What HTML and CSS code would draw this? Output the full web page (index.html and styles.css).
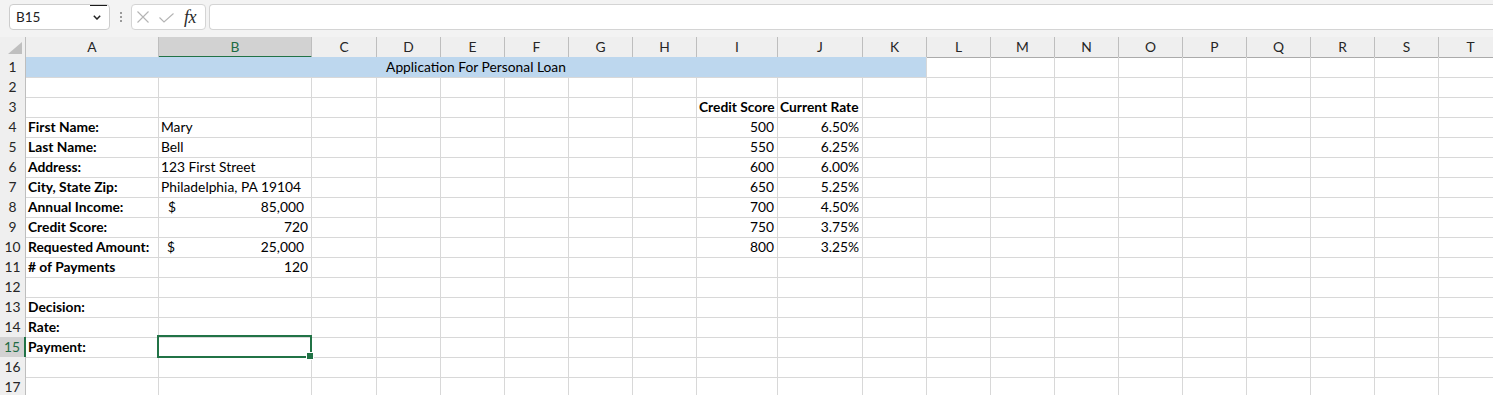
FILE: index.html
```html
<!DOCTYPE html>
<html lang="en">
<head>
<meta charset="utf-8">
<title>Application For Personal Loan</title>
<link rel="stylesheet" href="styles.css">
</head>
<body>
<div class="toolbar">
  <div class="namebox">
    <span class="ref">B15</span>
    <svg class="chev" width="8" height="5" viewBox="0 0 8 5"><path d="M0.8 0.8 L4 4 L7.2 0.8" fill="none" stroke="#222" stroke-width="1.5"/></svg>
  </div>
  <div class="grip"><i></i><i></i><i></i></div>
  <div class="fbtns">
    <svg class="xic" width="12" height="12" viewBox="0 0 12 12"><path d="M0.5 0.5 L11.5 11.5 M11.5 0.5 L0.5 11.5" stroke="#b4b4b4" stroke-width="1.1" fill="none"/></svg>
    <svg class="chk" width="15" height="10" viewBox="0 0 15 10"><path d="M0.5 4.5 L5 9 L14.5 0.5" stroke="#b4b4b4" stroke-width="1.1" fill="none"/></svg>
    <span class="fx">fx</span>
  </div>
  <div class="formula"></div>
</div>

<div class="sheet">
  <div class="row hdr">
    <div class="corner"><svg width="14" height="12" viewBox="0 0 14 12"><polygon points="14,0 14,12 0,12" fill="#bfbfbf"/></svg></div>
    <div class="ch">A</div><div class="ch act">B</div><div class="ch">C</div><div class="ch">D</div><div class="ch">E</div><div class="ch">F</div><div class="ch">G</div><div class="ch">H</div><div class="ch">I</div><div class="ch">J</div><div class="ch">K</div><div class="ch">L</div><div class="ch">M</div><div class="ch">N</div><div class="ch">O</div><div class="ch">P</div><div class="ch">Q</div><div class="ch">R</div><div class="ch">S</div><div class="ch">T</div>
  </div>

  <div class="row">
    <div class="rh">1</div>
    <div class="c title">Application For Personal Loan</div>
    <div class="c"></div><div class="c"></div><div class="c"></div><div class="c"></div><div class="c"></div><div class="c"></div><div class="c"></div><div class="c"></div><div class="c"></div>
  </div>

  <div class="row">
    <div class="rh">2</div>
    <div class="c"></div><div class="c"></div><div class="c"></div><div class="c"></div><div class="c"></div><div class="c"></div><div class="c"></div><div class="c"></div><div class="c"></div><div class="c"></div><div class="c"></div><div class="c"></div><div class="c"></div><div class="c"></div><div class="c"></div><div class="c"></div><div class="c"></div><div class="c"></div><div class="c"></div><div class="c"></div>
  </div>

  <div class="row">
    <div class="rh">3</div>
    <div class="c"></div><div class="c"></div><div class="c"></div><div class="c"></div><div class="c"></div><div class="c"></div><div class="c"></div><div class="c"></div>
    <div class="c b">Credit Score</div><div class="c b">Current Rate</div>
    <div class="c"></div><div class="c"></div><div class="c"></div><div class="c"></div><div class="c"></div><div class="c"></div><div class="c"></div><div class="c"></div><div class="c"></div><div class="c"></div>
  </div>

  <div class="row">
    <div class="rh">4</div>
    <div class="c b">First Name:</div><div class="c">Mary</div>
    <div class="c"></div><div class="c"></div><div class="c"></div><div class="c"></div><div class="c"></div><div class="c"></div>
    <div class="c r">500</div><div class="c r">6.50%</div>
    <div class="c"></div><div class="c"></div><div class="c"></div><div class="c"></div><div class="c"></div><div class="c"></div><div class="c"></div><div class="c"></div><div class="c"></div><div class="c"></div>
  </div>

  <div class="row">
    <div class="rh">5</div>
    <div class="c b">Last Name:</div><div class="c">Bell</div>
    <div class="c"></div><div class="c"></div><div class="c"></div><div class="c"></div><div class="c"></div><div class="c"></div>
    <div class="c r">550</div><div class="c r">6.25%</div>
    <div class="c"></div><div class="c"></div><div class="c"></div><div class="c"></div><div class="c"></div><div class="c"></div><div class="c"></div><div class="c"></div><div class="c"></div><div class="c"></div>
  </div>

  <div class="row">
    <div class="rh">6</div>
    <div class="c b">Address:</div><div class="c">123 First Street</div>
    <div class="c"></div><div class="c"></div><div class="c"></div><div class="c"></div><div class="c"></div><div class="c"></div>
    <div class="c r">600</div><div class="c r">6.00%</div>
    <div class="c"></div><div class="c"></div><div class="c"></div><div class="c"></div><div class="c"></div><div class="c"></div><div class="c"></div><div class="c"></div><div class="c"></div><div class="c"></div>
  </div>

  <div class="row">
    <div class="rh">7</div>
    <div class="c b">City, State Zip:</div><div class="c">Philadelphia, PA 19104</div>
    <div class="c"></div><div class="c"></div><div class="c"></div><div class="c"></div><div class="c"></div><div class="c"></div>
    <div class="c r">650</div><div class="c r">5.25%</div>
    <div class="c"></div><div class="c"></div><div class="c"></div><div class="c"></div><div class="c"></div><div class="c"></div><div class="c"></div><div class="c"></div><div class="c"></div><div class="c"></div>
  </div>

  <div class="row">
    <div class="rh">8</div>
    <div class="c b">Annual Income:</div><div class="c acc"><span>$</span><span>85,000</span></div>
    <div class="c"></div><div class="c"></div><div class="c"></div><div class="c"></div><div class="c"></div><div class="c"></div>
    <div class="c r">700</div><div class="c r">4.50%</div>
    <div class="c"></div><div class="c"></div><div class="c"></div><div class="c"></div><div class="c"></div><div class="c"></div><div class="c"></div><div class="c"></div><div class="c"></div><div class="c"></div>
  </div>

  <div class="row">
    <div class="rh">9</div>
    <div class="c b">Credit Score:</div><div class="c r">720</div>
    <div class="c"></div><div class="c"></div><div class="c"></div><div class="c"></div><div class="c"></div><div class="c"></div>
    <div class="c r">750</div><div class="c r">3.75%</div>
    <div class="c"></div><div class="c"></div><div class="c"></div><div class="c"></div><div class="c"></div><div class="c"></div><div class="c"></div><div class="c"></div><div class="c"></div><div class="c"></div>
  </div>

  <div class="row">
    <div class="rh">10</div>
    <div class="c b">Requested Amount:</div><div class="c acc acc2"><span>$</span><span>25,000</span></div>
    <div class="c"></div><div class="c"></div><div class="c"></div><div class="c"></div><div class="c"></div><div class="c"></div>
    <div class="c r">800</div><div class="c r">3.25%</div>
    <div class="c"></div><div class="c"></div><div class="c"></div><div class="c"></div><div class="c"></div><div class="c"></div><div class="c"></div><div class="c"></div><div class="c"></div><div class="c"></div>
  </div>

  <div class="row">
    <div class="rh">11</div>
    <div class="c b"># of Payments</div><div class="c r">120</div>
    <div class="c"></div><div class="c"></div><div class="c"></div><div class="c"></div><div class="c"></div><div class="c"></div><div class="c"></div><div class="c"></div><div class="c"></div><div class="c"></div><div class="c"></div><div class="c"></div><div class="c"></div><div class="c"></div><div class="c"></div><div class="c"></div><div class="c"></div><div class="c"></div>
  </div>

  <div class="row">
    <div class="rh">12</div>
    <div class="c"></div><div class="c"></div><div class="c"></div><div class="c"></div><div class="c"></div><div class="c"></div><div class="c"></div><div class="c"></div><div class="c"></div><div class="c"></div><div class="c"></div><div class="c"></div><div class="c"></div><div class="c"></div><div class="c"></div><div class="c"></div><div class="c"></div><div class="c"></div><div class="c"></div><div class="c"></div>
  </div>

  <div class="row">
    <div class="rh">13</div>
    <div class="c b">Decision:</div>
    <div class="c"></div><div class="c"></div><div class="c"></div><div class="c"></div><div class="c"></div><div class="c"></div><div class="c"></div><div class="c"></div><div class="c"></div><div class="c"></div><div class="c"></div><div class="c"></div><div class="c"></div><div class="c"></div><div class="c"></div><div class="c"></div><div class="c"></div><div class="c"></div><div class="c"></div>
  </div>

  <div class="row">
    <div class="rh">14</div>
    <div class="c b">Rate:</div>
    <div class="c"></div><div class="c"></div><div class="c"></div><div class="c"></div><div class="c"></div><div class="c"></div><div class="c"></div><div class="c"></div><div class="c"></div><div class="c"></div><div class="c"></div><div class="c"></div><div class="c"></div><div class="c"></div><div class="c"></div><div class="c"></div><div class="c"></div><div class="c"></div><div class="c"></div>
  </div>

  <div class="row">
    <div class="rh act">15</div>
    <div class="c b">Payment:</div><div class="c sel"></div>
    <div class="c"></div><div class="c"></div><div class="c"></div><div class="c"></div><div class="c"></div><div class="c"></div><div class="c"></div><div class="c"></div><div class="c"></div><div class="c"></div><div class="c"></div><div class="c"></div><div class="c"></div><div class="c"></div><div class="c"></div><div class="c"></div><div class="c"></div><div class="c"></div>
  </div>

  <div class="row">
    <div class="rh">16</div>
    <div class="c"></div><div class="c"></div><div class="c"></div><div class="c"></div><div class="c"></div><div class="c"></div><div class="c"></div><div class="c"></div><div class="c"></div><div class="c"></div><div class="c"></div><div class="c"></div><div class="c"></div><div class="c"></div><div class="c"></div><div class="c"></div><div class="c"></div><div class="c"></div><div class="c"></div><div class="c"></div>
  </div>

  <div class="row">
    <div class="rh">17</div>
    <div class="c"></div><div class="c"></div><div class="c"></div><div class="c"></div><div class="c"></div><div class="c"></div><div class="c"></div><div class="c"></div><div class="c"></div><div class="c"></div><div class="c"></div><div class="c"></div><div class="c"></div><div class="c"></div><div class="c"></div><div class="c"></div><div class="c"></div><div class="c"></div><div class="c"></div><div class="c"></div>
  </div>
</div>
</body>
</html>
```

FILE: styles.css
```css
html, body {
  margin: 0;
  padding: 0;
  background: #ffffff;
  overflow: hidden;
}
body {
  font-family: Lato, "Liberation Sans", sans-serif;
  color: #000;
}

/* ---------- formula bar ---------- */
.toolbar {
  height: 37px;
  box-sizing: border-box;
  background: #f3f3f3;
  display: flex;
  align-items: flex-start;
  padding: 4px 0 0 9px;
}
.namebox {
  position: relative;
  width: 101px;
  height: 26px;
  box-sizing: border-box;
  border: 1px solid #cdcdcd;
  border-radius: 4px;
  background: #fff;
  display: flex;
  align-items: center;
  justify-content: space-between;
  padding: 0 8px 0 6px;
  font-size: 13.5px;
  color: #222;
}
.namebox::before {
  content: "";
  position: absolute;
  top: 0;
  left: 80px;
  width: 17px;
  height: 1px;
  background: #1a1a1a;
}
.chev { display: block; }
.grip {
  width: 21px;
  display: flex;
  flex-direction: column;
  align-items: center;
  gap: 2px;
  padding-top: 8px;
}
.grip i {
  display: block;
  width: 2px;
  height: 2px;
  background: #9a9a9a;
}
.fbtns {
  width: 75px;
  height: 26px;
  box-sizing: border-box;
  border: 1px solid #d4d4d4;
  border-radius: 4px;
  background: #fff;
  display: flex;
  align-items: center;
  padding-left: 5px;
}
.xic { display: block; }
.chk { display: block; margin-left: 10px; margin-top: 1px; }
.fx {
  margin-left: 10px;
  font-family: "Liberation Serif", serif;
  font-style: italic;
  font-size: 18px;
  color: #2a2a2a;
  line-height: 1;
  letter-spacing: -0.5px;
}
.formula {
  flex: 1;
  margin-left: 3px;
  height: 26px;
  box-sizing: border-box;
  border: 1px solid #d4d4d4;
  border-right: none;
  border-radius: 4px 0 0 4px;
  background: #fff;
}

/* ---------- sheet ---------- */
.row {
  display: grid;
  grid-template-columns: 26px 133px 153px 65px repeat(5, 64px) 81px 85px repeat(10, 64px);
  height: 20px;
}
.hdr > div {
  box-sizing: border-box;
  background: #efefef;
  border-right: 1px solid #bebebe;
  border-bottom: 1px solid #ababab;
  font-size: 13.8px;
  line-height: 19px;
  text-align: center;
  color: #262626;
}
.corner {
  display: flex;
  align-items: flex-end;
  justify-content: flex-end;
  padding: 0 3px 3px 0;
}
.corner svg { display: block; }
.hdr > .ch.act {
  background: #d2d2d2;
  color: #1e6b43;
  border-bottom: 2px solid #217346;
}
.rh {
  box-sizing: border-box;
  background: #efefef;
  border-right: 1px solid #bebebe;
  border-bottom: 1px solid #d4d4d4;
  font-size: 13.8px;
  line-height: 20px;
  text-align: center;
  color: #262626;
}
.rh.act {
  background: #d2d2d2;
  color: #1e6b43;
  border-right: 2px solid #217346;
}
.c {
  box-sizing: border-box;
  border-right: 1px solid #d8d8d8;
  border-bottom: 1px solid #d8d8d8;
  font-size: 13.8px;
  line-height: 20px;
  padding: 0 2px;
  white-space: nowrap;
}
.b { font-weight: 700; }
.r { text-align: right; padding-right: 3px; }
.title {
  grid-column: span 11;
  background: #bdd7ee;
  text-align: center;
}
.acc {
  display: flex;
  justify-content: space-between;
  padding: 0 7px 0 9px;
}
.acc2 { padding-left: 8px; }
.sel { position: relative; }
.sel::after {
  content: "";
  position: absolute;
  left: -2px;
  top: -2px;
  right: -1px;
  bottom: -1px;
  border: 2px solid #217346;
  z-index: 2;
}
.sel::before {
  content: "";
  position: absolute;
  right: -3px;
  bottom: -3px;
  width: 6px;
  height: 6px;
  background: #217346;
  border: 1px solid #fff;
  z-index: 3;
}
```
